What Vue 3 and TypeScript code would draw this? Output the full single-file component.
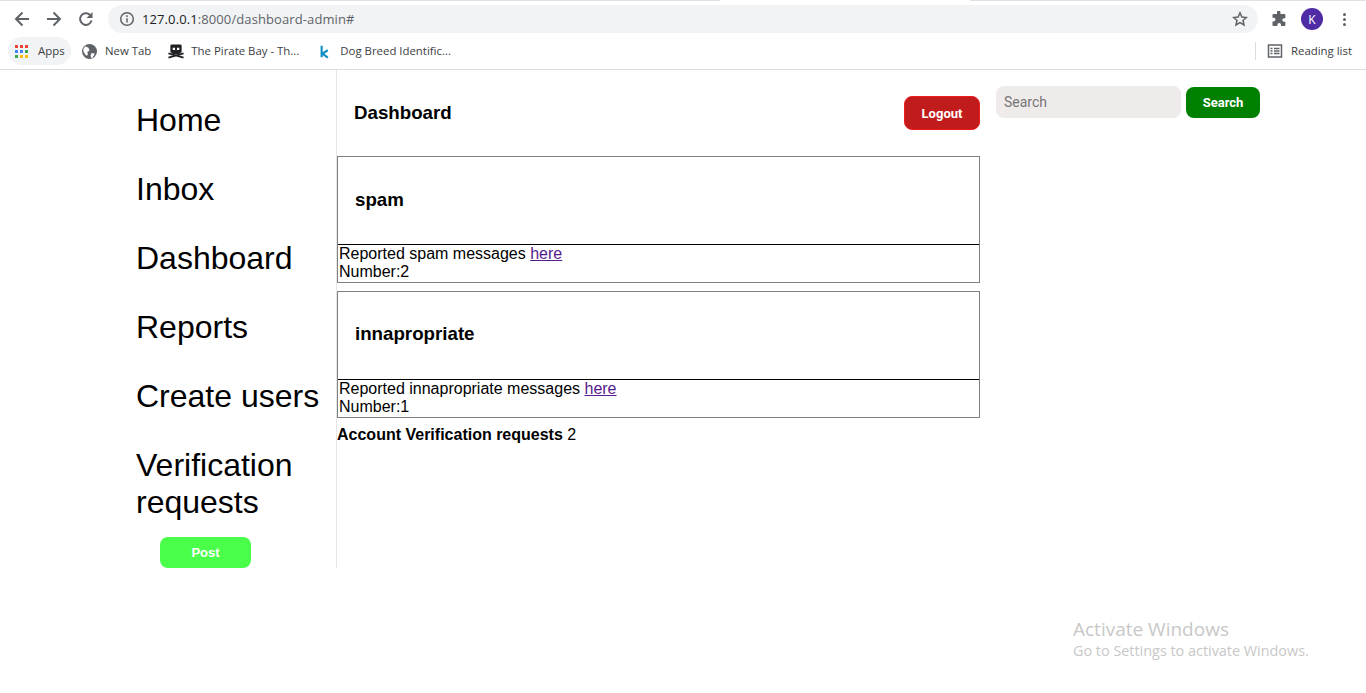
<script setup lang="ts">
const navItems = ['Home', 'Inbox', 'Dashboard', 'Reports', 'Create users', 'Verification requests']

const reports = [
  { title: 'spam', label: 'Reported spam messages', count: 2 },
  { title: 'innapropriate', label: 'Reported innapropriate messages', count: 1 },
]

const appsColors = ['#ea4335', '#ea4335', '#ea4335', '#4285f4', '#4285f4', '#34a853', '#34a853', '#fbbc04', '#fbbc04']
</script>

<template>
  <div class="browser">
    <div class="top-strip"></div>
    <div class="toolbar">
      <button class="tool-btn" aria-label="Back">
        <svg width="18" height="18" viewBox="0 0 18 18"><path d="M16 9H3.500M9.500 2.500 3 9l6.500 6.500" /></svg>
      </button>
      <button class="tool-btn" aria-label="Forward">
        <svg width="18" height="18" viewBox="0 0 18 18"><path d="M2 9h12.500M8.500 2.500 15 9l-6.500 6.500" /></svg>
      </button>
      <button class="tool-btn reload" aria-label="Reload">
        <svg width="18" height="18" viewBox="0 0 18 18">
          <path d="M14.500 10.500A5.800 5.800 0 1 1 13 5" />
          <path class="solid" d="M15.500 2v6h-6z" />
        </svg>
      </button>
      <div class="omnibox">
        <svg class="info" width="16" height="16" viewBox="0 0 16 16">
          <circle cx="8" cy="8" r="6.300" />
          <path d="M8 7.200v4.300M8 4.300v1.600" />
        </svg>
        <span class="url"><span class="host">127.0.0.1</span>:8000/dashboard-admin#</span>
        <svg class="star" width="16" height="16" viewBox="0 0 16 16">
          <path d="M8 1.800l1.900 4.200 4.500.5-3.400 3 1 4.500L8 11.700 4 14l1-4.500-3.400-3 4.500-.5z" />
        </svg>
      </div>
      <svg class="puzzle" width="16" height="16" viewBox="0 0 16 16">
        <path d="M6 1.200a1.700 1.700 0 0 1 3.400 0V3h4a1 1 0 0 1 1 1v3.200h-1.300a1.800 1.800 0 0 0 0 3.600h1.300V14a1 1 0 0 1-1 1H10v-1.300a1.800 1.800 0 0 0-3.600 0V15H2.500a1 1 0 0 1-1-1v-3.600h1.200a1.800 1.800 0 0 0 0-3.600H1.500V4a1 1 0 0 1 1-1H6z" />
      </svg>
      <span class="avatar">K</span>
      <span class="kebab"><i></i><i></i><i></i></span>
    </div>
    <div class="bookmarks">
      <div class="apps">
        <span class="apps-grid"><i v-for="(c, i) in appsColors" :key="i" :style="{ background: c }"></i></span>
        <span class="label">Apps</span>
      </div>
      <div class="mark globe">
        <svg width="15" height="15" viewBox="0 0 14 14">
          <circle cx="7" cy="7" r="7" fill="#5f6368" />
          <path fill="#fff" d="M3 2 6 3.500l1 2.500-2 1.500L5.500 10 4 11 1.500 7.500 1.200 5zM9 8.500l3 .5-2 3.500-1.500.5L8 10.500z" />
        </svg>
        <span class="label">New Tab</span>
      </div>
      <div class="mark pirate">
        <svg width="16" height="16" viewBox="0 0 17 16">
          <path fill="#202124" d="M4 1h9a1.500 1.500 0 0 1 1.500 1.500v6A1.500 1.500 0 0 1 13 10h-.500v1.500h-8V10H4a1.500 1.500 0 0 1-1.500-1.500v-6A1.500 1.500 0 0 1 4 1z" />
          <path fill="#fff" d="M5 4.500h2.500V7H5zM9.500 4.500H12V7H9.500z" />
          <path stroke="#202124" stroke-width="1.800" d="M.5 10.500l16 4.500M16.500 10.500l-16 4.500" />
        </svg>
        <span class="label">The Pirate Bay - Th...</span>
      </div>
      <div class="mark kaggle">
        <svg width="9" height="15" viewBox="0 0 11 16">
          <path fill="none" stroke="#0f8fc4" stroke-width="2.600" d="M2 1v14M9.500 6.500 3 10.500 9.500 15.500" />
        </svg>
        <span class="label">Dog Breed Identific...</span>
      </div>
      <div class="reading">
        <svg width="16" height="16" viewBox="0 0 16 16">
          <rect x="1.500" y="2" width="13" height="12" />
          <path d="M3.500 5.500h2M7 5.500h5.500M3.500 8h2M7 8h5.500M3.500 10.500h2M7 10.500h5.500" />
        </svg>
        <span class="label">Reading list</span>
      </div>
    </div>
  </div>

  <main class="page">
    <aside class="sidebar">
      <nav class="nav">
        <a v-for="item in navItems" :key="item" class="nav-link">{{ item }}</a>
      </nav>
      <button class="post">Post</button>
    </aside>

    <section class="content">
      <header class="content-head">
        <h2>Dashboard</h2>
        <button class="logout">Logout</button>
      </header>

      <article v-for="r in reports" :key="r.title" class="report">
        <h3>{{ r.title }}</h3>
        <div class="report-body">
          {{ r.label }} <a href="#" class="link">here</a><br />
          Number:{{ r.count }}
        </div>
      </article>

      <p class="verify"><strong>Account Verification requests</strong> 2</p>
    </section>

    <aside class="search">
      <input type="text" placeholder="Search" />
      <button>Search</button>
    </aside>
  </main>

  <div class="activate">
    <div class="activate-title">Activate Windows</div>
    <div>Go to Settings to activate Windows.</div>
  </div>
</template>

<style scoped>
.browser {
  height: 70px;
  box-sizing: border-box;
  border-bottom: 1px solid #dadce0;
  font-family: "Open Sans", "Noto Sans", sans-serif;
  color: #3c4043;
}

.top-strip {
  height: 1px;
  background: linear-gradient(to right, #dee1e6 720px, #fff 720px, #fff 970px, #dee1e6 970px);
}

.toolbar {
  height: 36px;
  display: flex;
  align-items: center;
  padding-left: 13px;
}

.tool-btn {
  width: 18px;
  height: 18px;
  padding: 0;
  margin-right: 14px;
  border: 0;
  background: none;
}

.tool-btn.reload {
  margin-right: 13px;
}

.tool-btn svg {
  display: block;
  fill: none;
  stroke: #5f6368;
  stroke-width: 2;
}

.tool-btn .solid {
  fill: #5f6368;
  stroke: none;
}

.omnibox {
  width: 1150px;
  height: 28px;
  padding: 0 10px 0 11px;
  box-sizing: border-box;
  display: flex;
  align-items: center;
  border-radius: 14px;
  background: #f1f3f4;
}

.info {
  fill: none;
  stroke: #5f6368;
  stroke-width: 1.500;
}

.url {
  margin-left: 7px;
  font-size: 13px;
  color: #5f6368;
  letter-spacing: 0.1px;
}

.host {
  color: #202124;
}

.star {
  margin-left: auto;
  fill: none;
  stroke: #5f6368;
  stroke-width: 1.500;
}

.puzzle {
  margin-left: 13px;
  fill: #5f6368;
}

.avatar {
  width: 22px;
  height: 22px;
  margin-left: 14px;
  border-radius: 50%;
  display: flex;
  align-items: center;
  justify-content: center;
  background: #4f2ca6;
  color: #fff;
  font-size: 12px;
}

.kebab {
  margin-left: 20px;
  display: flex;
  flex-direction: column;
  gap: 2px;
}

.kebab i {
  width: 3px;
  height: 3px;
  border-radius: 50%;
  background: #5f6368;
}

.bookmarks {
  height: 28px;
  display: flex;
  align-items: center;
  padding-left: 8px;
  font-size: 11.4px;
}

.label {
  padding-bottom: 2px;
}

.apps {
  width: 63px;
  height: 28px;
  box-sizing: border-box;
  padding-left: 7px;
  display: flex;
  align-items: center;
  gap: 10px;
  border-radius: 14px;
  background: #f1f3f4;
}

.apps-grid {
  width: 13px;
  display: grid;
  grid-template-columns: repeat(3, 3px);
  gap: 2px;
}

.apps-grid i {
  height: 3px;
}

.mark {
  display: flex;
  align-items: center;
}

.globe {
  margin-left: 11px;
  gap: 8px;
}

.pirate {
  margin-left: 17px;
  gap: 7px;
}

.kaggle {
  margin-left: 21px;
  gap: 11px;
}

.reading {
  margin-left: auto;
  height: 18px;
  padding: 0 14px 0 11px;
  display: flex;
  align-items: center;
  gap: 8px;
  border-left: 1px solid #dadce0;
}

.reading svg {
  fill: none;
  stroke: #5f6368;
  stroke-width: 1.500;
}

.page {
  display: flex;
  align-items: flex-start;
  padding-left: 121px;
  font-family: "Liberation Sans", Arial, sans-serif;
  color: #000;
}

.sidebar {
  width: 216px;
  height: 498px;
  box-sizing: border-box;
  padding-left: 15px;
  border-right: 1px solid #e6e6e6;
}

.nav {
  padding-top: 24px;
  display: flex;
  flex-direction: column;
}

.nav-link {
  padding: 8px 0 12px;
  font-size: 32px;
  line-height: 37px;
  margin-bottom: 12px;
}

.nav-link:last-child {
  margin-bottom: 0;
  padding-bottom: 16px;
}

.post {
  display: block;
  width: 91px;
  height: 31px;
  margin-left: 24px;
  border: 0;
  border-radius: 8px;
  background: #4aff4a;
  color: #fff;
  font: 700 13px "Liberation Sans", Arial, sans-serif;
}

.content {
  width: 643px;
}

.content-head {
  height: 86px;
  box-sizing: border-box;
  padding: 26px 0 0 17px;
  display: flex;
  justify-content: space-between;
  align-items: flex-start;
}

.content-head h2 {
  margin: 6px 0 0;
  font-size: 18.72px;
  line-height: 22px;
}

.logout {
  width: 76px;
  height: 34px;
  border: 1px solid #ee1c1c;
  border-radius: 8px;
  background: #c01c1c;
  color: #fff;
  font: 700 13px Roboto, "Liberation Sans", sans-serif;
}

.report {
  border: 1px solid #808080;
  margin-bottom: 8px;
}

.report h3 {
  height: 88px;
  box-sizing: border-box;
  margin: 0;
  padding: 0 0 2px 17px;
  display: flex;
  align-items: center;
  font-size: 18.72px;
  border-bottom: 1px solid #000;
}

.report + .report h3 {
  padding-bottom: 4px;
}

.report-body {
  height: 37px;
  padding-left: 1px;
  font-size: 16px;
  line-height: 18px;
}

.link {
  color: #551a8b;
}

.verify {
  margin: 7px 0 0;
  font-size: 16px;
  line-height: 18px;
}

.search {
  margin-left: 16px;
  padding-top: 16px;
  display: flex;
  gap: 5px;
}

.search input {
  width: 185px;
  height: 32px;
  box-sizing: border-box;
  padding: 0 8px;
  border: 0;
  border-radius: 8px;
  background: #efebeb;
  font: 14px Roboto, sans-serif;
}

.search input::placeholder {
  color: #757575;
}

.search button {
  width: 74px;
  height: 31px;
  margin-top: 1px;
  border: 0;
  border-radius: 8px;
  background: #008000;
  color: #fff;
  font: 700 13px Roboto, "Liberation Sans", sans-serif;
}

.activate {
  position: absolute;
  left: 1073px;
  top: 618px;
  color: #c8c8c8;
  font: 14.4px/22px "Open Sans", "Noto Sans", sans-serif;
}

.activate-title {
  font-size: 19px;
}
</style>

<style>
body {
  background: #fff;
}
</style>
